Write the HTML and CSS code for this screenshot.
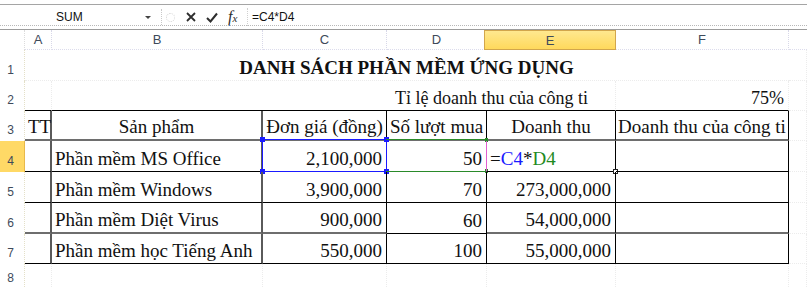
FILE: index.html
```html
<!DOCTYPE html>
<html>
<head>
    <title>DANH SÁCH PHẦN MỀM ỨNG DỤNG</title>
    <meta charset="utf-8">
    <link rel="stylesheet" href="styles.css">
</head>
<body>
    <!-- Formula bar -->
    <div class="formula-bar">
        <div class="name-box">SUM</div>
        <div class="name-arrow"></div>
        <div class="fb-sep"></div>
        <div class="fb-grip"></div>
        <svg class="fb-icon fb-cancel" width="10" height="10" viewBox="0 0 10 10">
            <path d="M1 1 L9 9 M9 1 L1 9" stroke="#2e2e2e" stroke-width="1.8" fill="none"/>
        </svg>
        <svg class="fb-icon fb-enter" width="12" height="11" viewBox="0 0 12 11">
            <path d="M1 6 L4.5 9.5 L11 1.5" stroke="#2e2e2e" stroke-width="2" fill="none"/>
        </svg>
        <div class="fb-fx"><i>f</i><span>x</span></div>
        <div class="fb-input">=C4*D4</div>
    </div>

    <!-- Sheet grid -->
    <div class="sheet">
        <!-- column headers -->
        <div class="corner"></div>
        <div class="col-head">A</div>
        <div class="col-head">B</div>
        <div class="col-head">C</div>
        <div class="col-head">D</div>
        <div class="col-head active-col">E</div>
        <div class="col-head">F</div>
        <div class="col-head blank"></div>

        <!-- row 1 -->
        <div class="row-head">1</div>
        <div class="cell title">DANH SÁCH PHẦN MỀM ỨNG DỤNG</div>
        <div class="cell"></div>

        <!-- row 2 -->
        <div class="row-head">2</div>
        <div class="cell b-b"></div>
        <div class="cell rate-label b-b">Tỉ lệ doanh thu của công ti</div>
        <div class="cell num rate b-b">75%</div>
        <div class="cell"></div>

        <!-- row 3 -->
        <div class="row-head">3</div>
        <div class="cell tt g-r g-b">TT</div>
        <div class="cell center g-r g-b">Sản phẩm</div>
        <div class="cell center b-r g-b">Đơn giá (đồng)</div>
        <div class="cell center b-r g-b">Số lượt mua</div>
        <div class="cell center b-r g-b">Doanh thu</div>
        <div class="cell center b-r g-b">Doanh thu của công ti</div>
        <div class="cell"></div>

        <!-- row 4 -->
        <div class="row-head active-row">4</div>
        <div class="cell g-r b-b"></div>
        <div class="cell g-r b-b">Phần mềm MS Office</div>
        <div class="cell num b-r b-b">2,100,000
            <div class="ref-box ref-blue">
                <span class="handle h-tl"></span>
                <span class="handle h-tr"></span>
                <span class="handle h-bl"></span>
                <span class="handle h-br"></span>
            </div>
        </div>
        <div class="cell num b-r b-b">50
            <div class="ref-box ref-green">
                <span class="handle h-tr"></span>
                <span class="handle h-br"></span>
            </div>
        </div>
        <div class="cell b-r b-b editing"><span>=</span><span class="c-blue">C4</span><span>*</span><span class="c-green">D4</span>
            <span class="fill-mark"></span>
        </div>
        <div class="cell b-r b-b"></div>
        <div class="cell"></div>

        <!-- row 5 -->
        <div class="row-head">5</div>
        <div class="cell g-r b-b"></div>
        <div class="cell g-r b-b">Phần mềm Windows</div>
        <div class="cell num b-r b-b">3,900,000</div>
        <div class="cell num b-r b-b">70</div>
        <div class="cell num b-r b-b">273,000,000</div>
        <div class="cell b-r b-b"></div>
        <div class="cell"></div>

        <!-- row 6 -->
        <div class="row-head">6</div>
        <div class="cell g-r g-b"></div>
        <div class="cell g-r g-b">Phần mềm Diệt Virus</div>
        <div class="cell num b-r g-b">900,000</div>
        <div class="cell num b-r b-b">60</div>
        <div class="cell num b-r g-b">54,000,000</div>
        <div class="cell b-r g-b"></div>
        <div class="cell"></div>

        <!-- row 7 -->
        <div class="row-head">7</div>
        <div class="cell g-r b-b"></div>
        <div class="cell g-r b-b">Phần mềm học Tiếng Anh</div>
        <div class="cell num b-r b-b">550,000</div>
        <div class="cell num b-r b-b">100</div>
        <div class="cell num b-r b-b">55,000,000</div>
        <div class="cell b-r b-b"></div>
        <div class="cell"></div>

        <!-- row 8 -->
        <div class="row-head">8</div>
        <div class="cell"></div>
        <div class="cell"></div>
        <div class="cell"></div>
        <div class="cell"></div>
        <div class="cell"></div>
        <div class="cell"></div>
        <div class="cell"></div>
    </div>
</body>
</html>
```

FILE: styles.css
```css
body {
    margin: 0;
    background: #fff;
    font-family: "Liberation Sans", Arial, sans-serif;
    overflow: hidden;
}
/* Formula bar across the top */
.formula-bar {
    box-sizing: border-box;
    border-top: 1px solid #a5a5a5;
    border-bottom: 1px solid #9c9c9c;
    margin-top: 4px;
    height: 26px;
    display: flex;
    align-items: center;
    font-size: 12px;
    color: #111;
    position: relative;
}
.formula-bar::after {
    /* dotted inner line under the bar */
    content: "";
    position: absolute;
    left: 0;
    right: 0;
    bottom: 3px;
    border-bottom: 1px dotted #b8b8b8;
}
.name-box {
    padding-left: 56px;
    box-sizing: border-box;
    width: 142px;
}
.name-arrow {
    width: 0;
    height: 0;
    border-left: 3px solid transparent;
    border-right: 3px solid transparent;
    border-top: 3px solid #444;
    margin-left: 3px;
    margin-top: 1px;
}
.fb-sep {
    width: 1px;
    height: 16px;
    border-left: 1px dotted #c9c9c9;
    margin-left: 10px;
}
.fb-grip {
    width: 7px;
    height: 7px;
    border: 1px dotted #d4d4d4;
    border-radius: 50%;
    margin-left: 3px;
    margin-right: 11px;
}
.fb-cancel {
    margin-right: 10px;
}
.fb-enter {
    margin-right: 10px;
}
.fb-fx {
    font-family: "Liberation Serif", serif;
    font-size: 16px;
    color: #2e2e2e;
    width: 14px;
}
.fb-fx span {
    font-size: 11px;
    font-style: italic;
}
.fb-input {
    border-left: 1px dotted #d0d0d0;
    height: 18px;
    line-height: 18px;
    margin-left: 5px;
    padding-left: 4px;
}

/* Sheet grid */
.sheet {
    display: grid;
    grid-template-columns: 25px 27px 211px 124px 100px 129px 173px 18px;
    grid-template-rows: 20px 31px 30px 30px 31px 31px 31px 30px 25px;
    font-family: "Liberation Serif", "Times New Roman", serif;
    font-size: 19px;
    color: #111;
}
.corner,
.col-head,
.row-head {
    font-family: "Liberation Sans", Arial, sans-serif;
    font-size: 12px;
    color: #3e4a5a;
    box-sizing: border-box;
}
.col-head {
    display: flex;
    align-items: center;
    justify-content: center;
    font-size: 13px;
    border-right: 1px dotted #d8d8e8;
    border-bottom: 1px dotted #dcdcec;
}
.col-head.blank {
    border-right: none;
}
.active-col {
    background: linear-gradient(#ffe88f, #ffd95c);
    border: 1px solid #d2a64c;
    margin-left: -3px;
}
.corner {
    border-right: 1px dotted #dcdcdc;
}
.row-head {
    display: flex;
    align-items: flex-end;
    justify-content: center;
    padding-bottom: 4px;
    padding-right: 3px;
    border-right: 1px dotted #e4e0c8;
}
.active-row {
    background: #ffd966;
    border-right: 1px solid #e8b94a;
}
.cell {
    box-sizing: border-box;
    display: flex;
    align-items: flex-end;
    padding: 0 4px 1px 3px;
    white-space: nowrap;
    border-right: 1px dotted #ececec;
    border-bottom: 1px dotted #ececec;
    position: relative;
}
.title {
    grid-column: 2 / 8;
    justify-content: center;
    font-weight: bold;
    font-size: 19px;
    padding-bottom: 1px;
    border-right: none;
}
.rate-label {
    grid-column: 3 / 7;
    justify-content: flex-end;
    padding-right: 27px;
    font-size: 18px;
}
.rate {
    font-size: 18px;
}
.num {
    justify-content: flex-end;
}
.center {
    justify-content: center;
    padding-left: 0;
    padding-right: 0;
}
.tt {
    padding-left: 3px;
    overflow: visible;
}
/* table borders */
.b-r {
    border-right: 1px solid #000;
}
.g-r {
    border-right: 2px solid #5a5a5a;
}
.b-b {
    border-bottom: 1px solid #000;
}
.g-b {
    border-bottom: 2px solid #6e6e6e;
}

/* formula references */
.ref-box {
    position: absolute;
    left: -1px;
    top: -2px;
    right: -1px;
    bottom: -1px;
    pointer-events: none;
}
.ref-blue {
    border: 1px solid #1a1aff;
}
.ref-green {
    border: 1px solid #2a8a2a;
    border-left: none;
}
.handle {
    position: absolute;
    width: 5px;
    height: 5px;
}
.ref-blue .handle {
    background: #1a1aff;
}
.ref-green .handle {
    background: #2a8a2a;
    width: 3px;
    height: 4px;
}
.h-tl { left: -3px; top: -3px; }
.h-tr { right: -3px; top: -3px; }
.h-bl { left: -3px; bottom: -3px; }
.h-br { right: -3px; bottom: -3px; }
.ref-green .h-tr { right: -2px; top: -2px; }
.ref-green .h-br { right: -2px; bottom: -2px; }

.editing {
    border-left: 1px solid #e060d0;
    margin-left: -1px;
}
.c-blue {
    color: #1a1aff;
}
.c-green {
    color: #1f8a1f;
}
.fill-mark {
    position: absolute;
    right: -3px;
    bottom: -3px;
    width: 3px;
    height: 3px;
    border: 1px solid #222;
    background: #fff;
}
```
